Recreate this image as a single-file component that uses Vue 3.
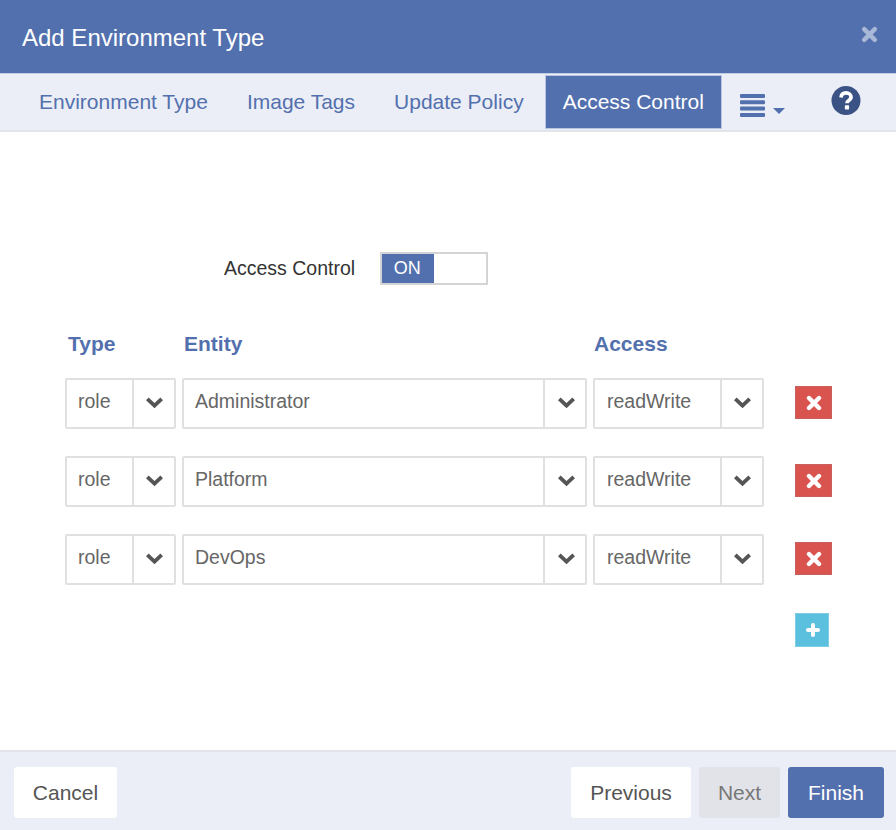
<script setup>
const tabs = ["Environment Type", "Image Tags", "Update Policy", "Access Control"];
const rows = [
  { type: "role", entity: "Administrator", access: "readWrite" },
  { type: "role", entity: "Platform", access: "readWrite" },
  { type: "role", entity: "DevOps", access: "readWrite" },
];
const crossPath = "M3 3 L13 13 M13 3 L3 13";
</script>

<template>
  <div class="dialog">
    <header class="head">
      <h1 class="title">Add Environment Type</h1>
      <svg class="close" viewBox="0 0 16 16" width="17" height="17">
        <path :d="crossPath" fill="none" stroke="#fff" stroke-opacity=".5" stroke-width="4.2" stroke-linecap="round" />
      </svg>
    </header>

    <nav class="tabs">
      <a v-for="t in tabs" :key="t" class="tab" :class="{ active: t === 'Access Control' }">{{ t }}</a>
      <span class="menu">
        <svg viewBox="0 0 25 23" width="25" height="23">
          <rect y="0" width="25" height="4" rx="1" fill="#5370ae" />
          <rect y="6.3" width="25" height="4" rx="1" fill="#5370ae" />
          <rect y="12.6" width="25" height="4" rx="1" fill="#5370ae" />
          <rect y="19" width="25" height="4" rx="1" fill="#5370ae" />
        </svg>
        <i class="caret"></i>
      </span>
      <svg class="help" viewBox="0 0 30 30" width="30" height="29">
        <circle cx="15" cy="15" r="15" fill="#3a5284" />
        <path d="M9.8 11.8 C10.2 8.6 12.4 7.2 15.1 7.2 C18 7.2 20.2 8.9 20.2 11.4 C20.2 13.4 19 14.3 17.6 15.2 C16.4 16 16 16.5 16 17.8" fill="none" stroke="#fff" stroke-width="3.8" />
        <rect x="13.8" y="20" width="4.4" height="4.2" rx=".6" fill="#fff" />
      </svg>
    </nav>

    <main class="body">
      <div class="switch-row">
        <span class="switch-label">Access Control</span>
        <div class="switch">
          <span class="on">ON</span>
        </div>
      </div>

      <div class="labels">
        <span class="l-type">Type</span>
        <span class="l-entity">Entity</span>
        <span class="l-access">Access</span>
      </div>

      <div v-for="r in rows" :key="r.entity" class="row">
        <div class="select s-type">
          <span class="value">{{ r.type }}</span>
          <span class="arrow">
            <svg viewBox="0 0 18 12" width="19" height="13"><path d="M2.2 2.6 L9 9 L15.8 2.6" fill="none" stroke="#555" stroke-width="3.6" /></svg>
          </span>
        </div>
        <div class="select s-entity">
          <span class="value">{{ r.entity }}</span>
          <span class="arrow">
            <svg viewBox="0 0 18 12" width="19" height="13"><path d="M2.2 2.6 L9 9 L15.8 2.6" fill="none" stroke="#555" stroke-width="3.6" /></svg>
          </span>
        </div>
        <div class="select s-access">
          <span class="value">{{ r.access }}</span>
          <span class="arrow">
            <svg viewBox="0 0 18 12" width="19" height="13"><path d="M2.2 2.6 L9 9 L15.8 2.6" fill="none" stroke="#555" stroke-width="3.6" /></svg>
          </span>
        </div>
        <button class="icon-btn del">
          <svg viewBox="0 0 16 16" width="16" height="16">
            <path :d="crossPath" fill="none" stroke="#fff" stroke-width="4.4" stroke-linecap="round" />
          </svg>
        </button>
      </div>

      <div class="add-row">
        <button class="icon-btn add">
          <svg viewBox="0 0 16 16" width="16" height="16">
            <path d="M8 3 V13 M3 8 H13" fill="none" stroke="#fff" stroke-width="4" stroke-linecap="round" />
          </svg>
        </button>
      </div>
    </main>

    <footer class="foot">
      <button class="btn cancel">Cancel</button>
      <button class="btn prev">Previous</button>
      <button class="btn next">Next</button>
      <button class="btn finish">Finish</button>
    </footer>
  </div>
</template>

<style>
html,
body {
  margin: 0;
  background: #fff;
}
</style>

<style scoped>
.dialog {
  width: 896px;
  height: 830px;
  display: flex;
  flex-direction: column;
  font-family: "Liberation Sans", Arial, sans-serif;
  overflow: hidden;
}
.head {
  height: 73px;
  flex: none;
  background: #5370ae;
  display: flex;
  align-items: center;
  justify-content: space-between;
  padding: 0 18px 0 22px;
  box-sizing: border-box;
}
.title {
  margin: 2px 0 0;
  font-size: 24px;
  font-weight: 400;
  color: #fff;
}
.close {
  margin-top: -5px;
}
.tabs {
  height: 59px;
  flex: none;
  box-sizing: border-box;
  border-top: 1px solid #c3cde3;
  border-bottom: 2px solid #e2e4e9;
  background: #ebeef6;
  display: flex;
  padding-left: 21px;
}
.tab {
  height: 54px;
  margin-top: 1px;
  margin-right: 3px;
  padding: 0 18px;
  font-size: 21px;
  line-height: 54px;
  color: #5370ae;
}
.tab.active {
  margin-right: 0;
  background: #5370ae;
  color: #fff;
  box-shadow: 0 0 0 1px #b9c6e0 inset;
}
.menu {
  margin: 20px 0 0 18px;
  display: flex;
  align-items: flex-end;
  height: 23px;
}
.menu svg {
  display: block;
}
.caret {
  margin: 0 0 3px 8px;
  border-top: 6px solid #5370ae;
  border-left: 6px solid transparent;
  border-right: 6px solid transparent;
}
.help {
  margin: 12px 0 0 46px;
}
.body {
  flex: 1;
  padding: 120px 0 0 65px;
  background: #fff;
}
.switch-row {
  display: flex;
  align-items: center;
  padding-left: 159px;
  height: 33px;
}
.switch-label {
  font-size: 19.5px;
  color: #333;
  margin-right: 25px;
}
.switch {
  width: 108px;
  height: 33px;
  box-sizing: border-box;
  border: 2px solid #d4d4d4;
  background: #fff;
}
.on {
  display: block;
  width: 52px;
  height: 29px;
  box-sizing: border-box;
  padding-right: 2px;
  background: #5370ae;
  color: #fff;
  font-size: 18px;
  line-height: 29px;
  text-align: center;
}
.labels {
  display: flex;
  margin-top: 47px;
  height: 24px;
  font-size: 21px;
  line-height: 24px;
  font-weight: 700;
  color: #5370ae;
}
.l-type {
  width: 116px;
  padding-left: 3px;
  box-sizing: border-box;
  margin-right: 3px;
}
.l-entity {
  width: 410px;
}
.row {
  display: flex;
  align-items: center;
  gap: 6px;
  height: 51px;
  margin-top: 27px;
}
.labels + .row {
  margin-top: 22px;
}
.select {
  height: 51px;
  box-sizing: border-box;
  border: 2px solid #e0e0e0;
  border-radius: 2px;
  display: flex;
  font-size: 19.5px;
  color: #666;
}
.s-type {
  width: 111px;
}
.s-entity {
  width: 405px;
}
.s-access {
  width: 171px;
}
.value {
  flex: 1;
  padding-left: 11px;
  line-height: 43px;
}
.s-access .value {
  padding-left: 12px;
}
.arrow {
  width: 42px;
  flex: none;
  box-sizing: border-box;
  border-left: 2px solid #e0e0e0;
  display: flex;
  align-items: center;
  justify-content: center;
}
.arrow svg {
  margin-top: -3px;
}
.s-entity .arrow svg {
  margin-left: 2px;
}
.icon-btn {
  padding: 0;
  display: flex;
  align-items: center;
  justify-content: center;
  box-sizing: border-box;
  border-radius: 0;
}
.del {
  width: 37px;
  height: 33px;
  margin: -2px 0 0 25px;
  background: #d9534f;
  border: 1px solid #c9605c;
}
.add-row {
  margin: 28px 0 0 730px;
}
.add {
  width: 34px;
  height: 34px;
  padding-left: 2px;
  background: #5bc0de;
  border: 1px solid #7fcde4;
}
.foot {
  height: 80px;
  flex: none;
  box-sizing: border-box;
  border-top: 2px solid #e2e4e9;
  background: #ebeef6;
  display: flex;
  align-items: flex-start;
  gap: 8px;
  padding: 15px 12px 0 14px;
}
.btn {
  height: 51px;
  padding: 0;
  border: 0;
  border-radius: 3px;
  background: #fff;
  color: #555;
  font-family: inherit;
  font-size: 21px;
}
.cancel {
  width: 103px;
  margin-right: auto;
}
.prev {
  width: 120px;
}
.next {
  width: 81px;
  background: #e2e3e8;
  color: #777;
}
.finish {
  width: 96px;
  background: #5370ae;
  color: #fff;
}
</style>
